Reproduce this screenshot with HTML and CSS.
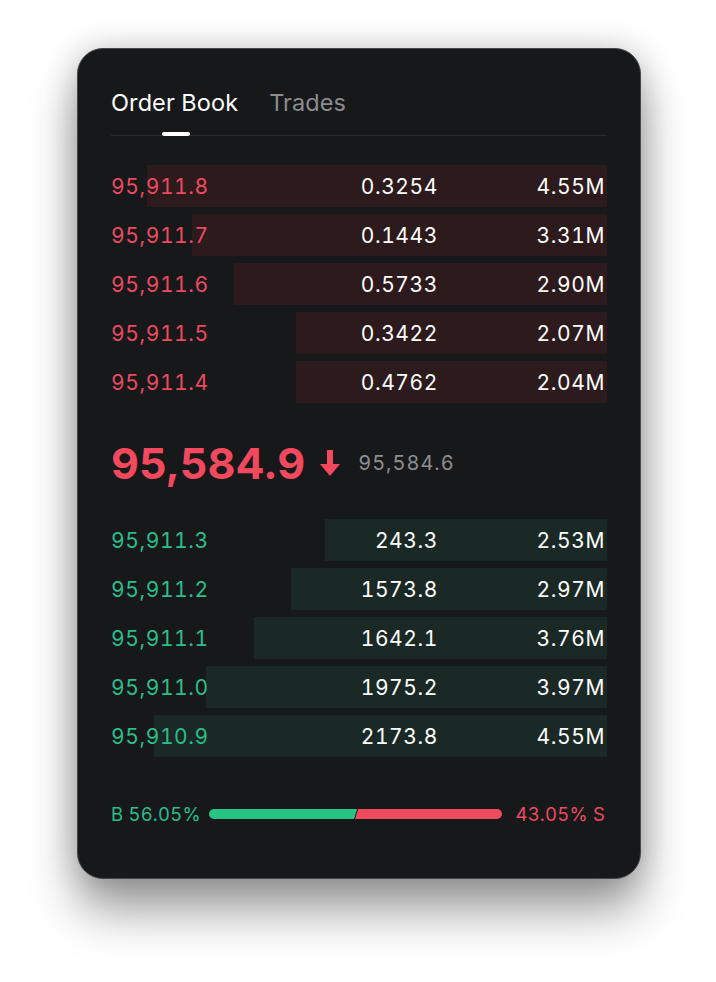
FILE: index.html
```html
<!DOCTYPE html>
<html lang="en">
<head>
    <meta charset="UTF-8">
    <meta name="viewport" content="width=device-width, initial-scale=1.0">
    <title>Order Book</title>
    <link rel="stylesheet" href="styles.css">
</head>
<body>
    <div class="card">
        <div class="tabs">
            <span class="tab active">Order Book</span>
            <span class="tab">Trades</span>
        </div>

        <ul class="book asks">
            <li class="row"><span class="bar" style="width: 92.7%"></span><span class="price">95,911.8</span><span class="amount">0.3254</span><span class="total">4.55M</span></li>
            <li class="row"><span class="bar" style="width: 83.7%"></span><span class="price">95,911.7</span><span class="amount">0.1443</span><span class="total">3.31M</span></li>
            <li class="row"><span class="bar" style="width: 75.2%"></span><span class="price">95,911.6</span><span class="amount">0.5733</span><span class="total">2.90M</span></li>
            <li class="row"><span class="bar" style="width: 62.7%"></span><span class="price">95,911.5</span><span class="amount">0.3422</span><span class="total">2.07M</span></li>
            <li class="row"><span class="bar" style="width: 62.7%"></span><span class="price">95,911.4</span><span class="amount">0.4762</span><span class="total">2.04M</span></li>
        </ul>

        <div class="mid">
            <span class="last">95,584.9</span>
            <svg class="arrow" width="22" height="28" viewBox="0 0 22 28">
                <path d="M8 1h6v14h7L11 27 1 15h7z" fill="#f2495f"/>
            </svg>
            <span class="mark">95,584.6</span>
        </div>

        <ul class="book bids">
            <li class="row"><span class="bar" style="width: 56.9%"></span><span class="price">95,911.3</span><span class="amount">243.3</span><span class="total">2.53M</span></li>
            <li class="row"><span class="bar" style="width: 63.7%"></span><span class="price">95,911.2</span><span class="amount">1573.8</span><span class="total">2.97M</span></li>
            <li class="row"><span class="bar" style="width: 71.2%"></span><span class="price">95,911.1</span><span class="amount">1642.1</span><span class="total">3.76M</span></li>
            <li class="row"><span class="bar" style="width: 80.8%"></span><span class="price">95,911.0</span><span class="amount">1975.2</span><span class="total">3.97M</span></li>
            <li class="row"><span class="bar" style="width: 91.3%"></span><span class="price">95,910.9</span><span class="amount">2173.8</span><span class="total">4.55M</span></li>
        </ul>

        <div class="ratio">
            <span class="buy">B 56.05%</span>
            <div class="ratio-bar">
                <span class="ratio-buy" style="width: 50.5%"></span>
                <span class="ratio-sell"></span>
            </div>
            <span class="sell">43.05% S</span>
        </div>
    </div>
</body>
</html>
```

FILE: styles.css
```css
html {
    min-height: 100%;
}

body {
    margin: 0;
    min-height: 982px;
    background-color: #fff;
    font-family: Inter, "Noto Sans", sans-serif;
    font-variant-numeric: tabular-nums;
}

.card {
    box-sizing: border-box;
    width: 564px;
    height: 831px;
    margin: 0 0 0 77px;
    position: relative;
    top: 48px;
    padding: 40px 33px 0;
    background-color: #17181a;
    border: 1px solid #45464a;
    border-radius: 26px;
    box-shadow: 0 32px 48px rgba(0, 0, 0, 0.38), 0 0 32px rgba(0, 0, 0, 0.2);
}

/* タブ */
.tabs {
    display: flex;
    gap: 31px;
    padding-bottom: 18px;
    border-bottom: 1px solid #2a2b2e;
}

.tab {
    position: relative;
    font-size: 23.5px;
    line-height: 28px;
    letter-spacing: 0.1px;
    color: #8b8c8f;
}

.tab.active {
    color: #fff;
}

.tab.active::after {
    content: "";
    position: absolute;
    left: 50%;
    bottom: -19px;
    width: 28px;
    height: 4px;
    margin-left: -13px;
    border-radius: 2px;
    background-color: #fff;
}

/* 板 */
.book {
    list-style: none;
    margin: 0;
    padding: 0;
    display: flex;
    flex-direction: column;
    gap: 7px;
}

.asks {
    margin-top: 29px;
}

.row {
    position: relative;
    display: grid;
    grid-template-columns: 1fr 140px 167px;
    align-items: center;
    height: 42px;
    padding: 1px 2px 0 0;
    box-sizing: border-box;
    font-size: 21px;
    color: #fff;
    letter-spacing: 0.6px;
}

.row .bar {
    position: absolute;
    top: 0;
    right: 0;
    bottom: 0;
}

.asks .bar {
    background-color: #2c1a1d;
}

.bids .bar {
    background-color: #1a2925;
}

.price,
.amount,
.total {
    position: relative;
}

.amount,
.total {
    text-align: right;
}

.asks .price {
    color: #ec4a61;
}

.bids .price {
    color: #2bbd8a;
}

/* 現在値 */
.mid {
    display: flex;
    align-items: center;
    height: 116px;
    padding-top: 4px;
    box-sizing: border-box;
}

.last {
    font-size: 43px;
    font-weight: 700;
    color: #f2495f;
    font-variant-numeric: normal;
    letter-spacing: 0.1px;
}

.arrow {
    margin-left: 14px;
}

.mark {
    margin-left: 17px;
    font-size: 20px;
    letter-spacing: 1px;
    color: #8d8e91;
}

/* 買い売り比率 */
.ratio {
    display: flex;
    align-items: center;
    margin-top: 47px;
    height: 20px;
    padding-right: 2px;
    font-size: 18.5px;
    letter-spacing: 0.2px;
}

.buy {
    color: #2bbd8a;
}

.sell {
    color: #ec4a61;
}

.ratio-bar {
    flex: 1;
    display: flex;
    height: 10px;
    margin: 0 13px 0 8px;
}

.ratio-buy {
    height: 100%;
    background-color: #27c486;
    border-radius: 5px 0 0 5px;
    clip-path: polygon(0 0, 100% 0, calc(100% - 3px) 100%, 0 100%);
}

.ratio-sell {
    flex: 1;
    height: 100%;
    margin-left: -2px;
    background-color: #f04a5e;
    border-radius: 0 5px 5px 0;
    clip-path: polygon(3px 0, 100% 0, 100% 100%, 0 100%);
}
```
